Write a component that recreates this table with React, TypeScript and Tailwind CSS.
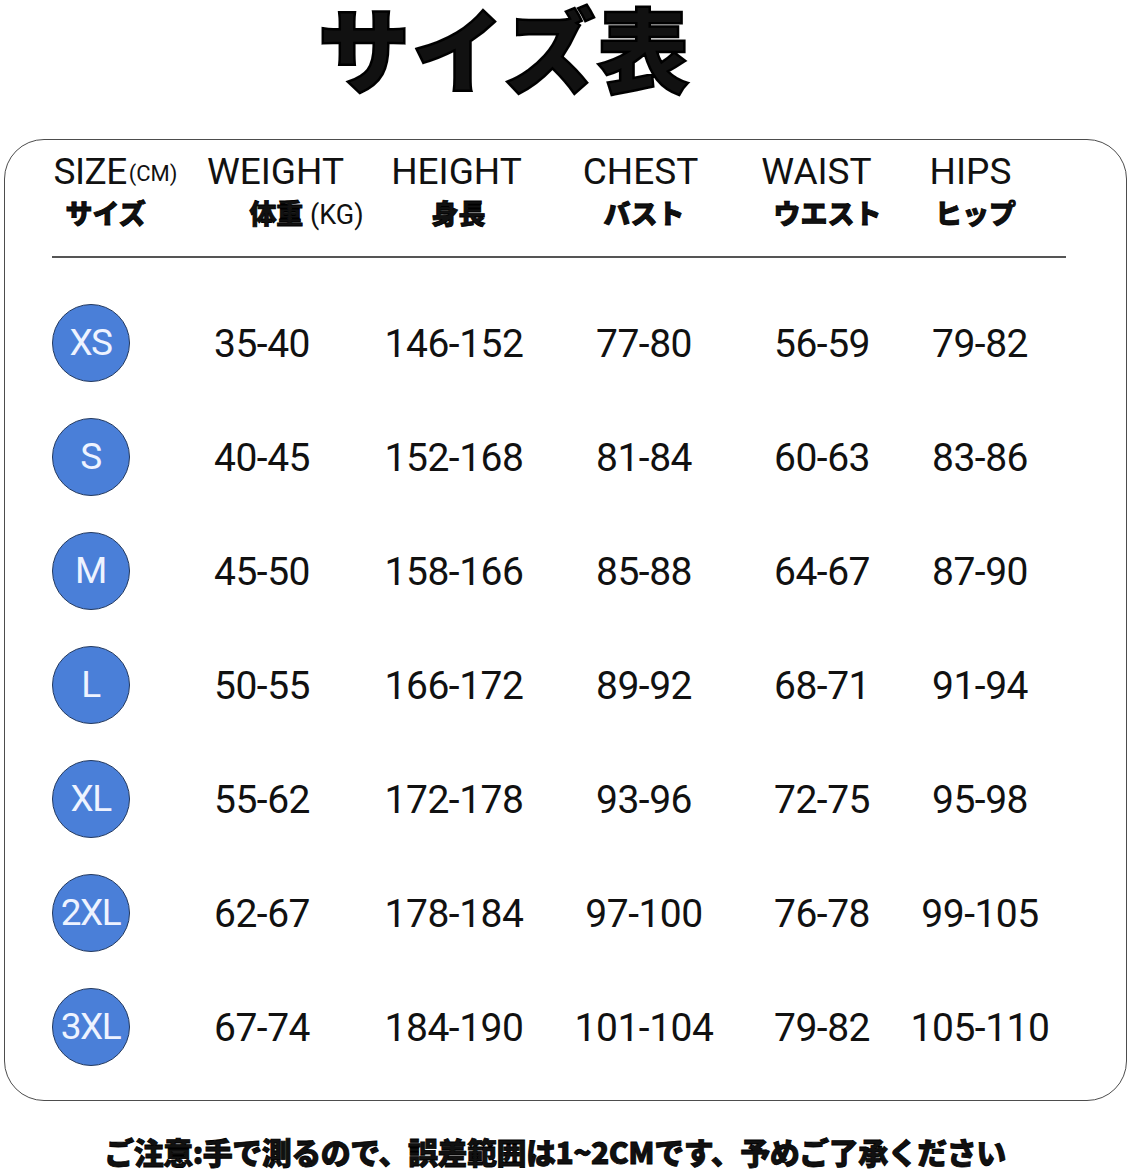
import React from 'react';

interface SizeRow {
  size: string;
  weight: string;
  height: string;
  chest: string;
  waist: string;
  hips: string;
}

const rows: SizeRow[] = [
  { size: 'XS', weight: '35-40', height: '146-152', chest: '77-80', waist: '56-59', hips: '79-82' },
  { size: 'S', weight: '40-45', height: '152-168', chest: '81-84', waist: '60-63', hips: '83-86' },
  { size: 'M', weight: '45-50', height: '158-166', chest: '85-88', waist: '64-67', hips: '87-90' },
  { size: 'L', weight: '50-55', height: '166-172', chest: '89-92', waist: '68-71', hips: '91-94' },
  { size: 'XL', weight: '55-62', height: '172-178', chest: '93-96', waist: '72-75', hips: '95-98' },
  { size: '2XL', weight: '62-67', height: '178-184', chest: '97-100', waist: '76-78', hips: '99-105' },
  { size: '3XL', weight: '67-74', height: '184-190', chest: '101-104', waist: '79-82', hips: '105-110' },
];

const gridCols = 'grid grid-cols-[171px_172px_212px_168px_188px_128px]';
const jp = "font-['Noto_Sans_CJK_JP',sans-serif] font-black [-webkit-text-stroke:0.8px_#000]";

function SizeBadge({ label }: { label: string }) {
  return (
    <div className="w-[78px] h-[78px] rounded-full bg-[#4a7fd8] border-[1.5px] border-[#23395f] flex items-center justify-center text-[37px] leading-none text-[#eef3ff] tracking-[-1.5px]">
      {label}
    </div>
  );
}

export default function App() {
  return (
    <div className="w-[1130px] h-[1172px] bg-white overflow-hidden text-[#111] font-['Roboto','Noto_Sans_CJK_JP',sans-serif]">
      {/* Title */}
      <div className="h-[139px] pl-[318px]">
        <h1 className="text-[92px] leading-[92px] tracking-[2px] font-black font-['Noto_Sans_CJK_JP',sans-serif] [-webkit-text-stroke:2.5px_#000]">
          サイズ表
        </h1>
      </div>

      {/* Table card */}
      <div className="ml-[4px] w-[1123px] h-[962px] border-[1.5px] border-[#4d4d4d] rounded-[40px]">
        {/* Header */}
        <div className={`${gridCols} h-[116px] pt-[12px]`}>
          <div className="flex flex-col whitespace-nowrap">
            <div className="pl-[48.5px] h-[40px] text-[37px] leading-[40px] tracking-[-0.5px]">
              SIZE<span className="text-[22px] align-[3px] tracking-[0px] pl-[2px]">(CM)</span>
            </div>
            <div className={`pl-[60.5px] h-[42px] text-[27px] leading-[42px] ${jp}`}>サイズ</div>
          </div>
          <div className="flex flex-col items-center whitespace-nowrap">
            <div className="pl-[27px] h-[40px] text-[37px] leading-[40px]">WEIGHT</div>
            <div className="pl-[89px] h-[42px] text-[27px] leading-[42px] whitespace-nowrap">
              <span className={jp}>体重</span> (KG)
            </div>
          </div>
          <div className="flex flex-col items-center whitespace-nowrap">
            <div className="pl-[5px] h-[40px] text-[37px] leading-[40px]">HEIGHT</div>
            <div className={`pl-[9px] h-[42px] text-[27px] leading-[42px] ${jp}`}>身長</div>
          </div>
          <div className="flex flex-col items-center whitespace-nowrap">
            <div className="pr-[7px] h-[40px] text-[37px] leading-[40px]">CHEST</div>
            <div className={`h-[42px] text-[27px] leading-[42px] ${jp}`}>バスト</div>
          </div>
          <div className="flex flex-col items-center whitespace-nowrap">
            <div className="pr-[11px] h-[40px] text-[37px] leading-[40px]">WAIST</div>
            <div className={`pl-[11px] h-[42px] text-[27px] leading-[42px] ${jp}`}>ウエスト</div>
          </div>
          <div className="flex flex-col items-center whitespace-nowrap">
            <div className="pr-[19px] h-[40px] text-[37px] leading-[40px]">HIPS</div>
            <div className={`pr-[9px] h-[42px] text-[27px] leading-[42px] ${jp}`}>ヒップ</div>
          </div>
        </div>

        {/* Divider */}
        <div className="ml-[46.5px] w-[1014px] h-[1.5px] bg-[#555]" />

        {/* Rows */}
        <div className="pt-[28px]">
          {rows.map((r) => (
            <div key={r.size} className={`${gridCols} h-[114px] items-center text-[39px] leading-[44px] tracking-[-0.5px]`}>
              <div className="flex justify-center">
                <SizeBadge label={r.size} />
              </div>
              <div className="flex justify-center pt-[3px] whitespace-nowrap">{r.weight}</div>
              <div className="flex justify-center pt-[3px] whitespace-nowrap">{r.height}</div>
              <div className="flex justify-center pt-[3px] whitespace-nowrap">{r.chest}</div>
              <div className="flex justify-center pt-[3px] whitespace-nowrap">{r.waist}</div>
              <div className="flex justify-center pt-[3px] whitespace-nowrap">{r.hips}</div>
            </div>
          ))}
        </div>
      </div>

      {/* Note */}
      <p className="mt-[30px] text-center pr-[20px] text-[30px] leading-[40px] font-black font-['Noto_Sans_CJK_JP',sans-serif] tracking-[-0.5px] [-webkit-text-stroke:0.8px_#000]">
        ご注意:手で測るので、誤差範囲は1~2CMです、予めご了承ください
      </p>
    </div>
  );
}
